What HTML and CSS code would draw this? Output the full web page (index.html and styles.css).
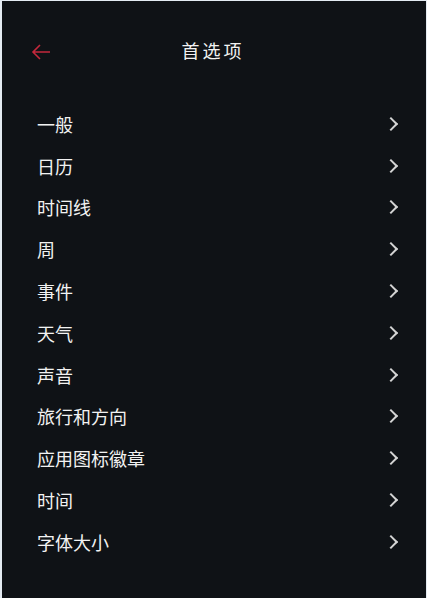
FILE: index.html
```html
<!DOCTYPE html>
<html lang="zh">
<head>
    <meta charset="UTF-8">
    <meta name="viewport" content="width=device-width, initial-scale=1.0">
    <title>首选项</title>
    <link rel="stylesheet" href="styles.css">
</head>
<body>
    <div class="screen">
        <header class="topbar">
            <a class="back" href="#">
                <svg width="20" height="16" viewBox="0 0 20 16"><path d="M19 8H2M9 1L2 8l7 7" fill="none" stroke="#c4283c" stroke-width="1.6"/></svg>
            </a>
            <h1>首选项</h1>
        </header>

        <ul class="menu">
            <li><span>一般</span><i class="chev"></i></li>
            <li><span>日历</span><i class="chev"></i></li>
            <li><span>时间线</span><i class="chev"></i></li>
            <li><span>周</span><i class="chev"></i></li>
            <li><span>事件</span><i class="chev"></i></li>
            <li><span>天气</span><i class="chev"></i></li>
            <li><span>声音</span><i class="chev"></i></li>
            <li><span>旅行和方向</span><i class="chev"></i></li>
            <li><span>应用图标徽章</span><i class="chev"></i></li>
            <li><span>时间</span><i class="chev"></i></li>
            <li><span>字体大小</span><i class="chev"></i></li>
        </ul>
    </div>
</body>
</html>
```

FILE: styles.css
```css
html, body {
    margin: 0;
    padding: 0;
    height: 100%;
}

body {
    background-color: #e4ebf2;
    font-family: "Noto Sans CJK SC", "Noto Sans", sans-serif;
}

.screen {
    margin: 1px 1px 0 2px;
    height: calc(100% - 1px);
    background-color: #0f1216;
    color: #f2f2f2;
}

.topbar {
    position: relative;
    height: 100px;
    display: flex;
    align-items: center;
    justify-content: center;
}

.topbar h1 {
    margin: 0 0 2px -2px;
    font-size: 18px;
    font-weight: normal;
    letter-spacing: 3px;
}

.back {
    position: absolute;
    left: 29px;
    top: 43px;
    line-height: 0;
}

.menu {
    list-style: none;
    margin: 2px 0 0;
    padding: 0 26px 0 35px;
}

.menu li {
    height: 41.8px;
    display: flex;
    align-items: center;
    justify-content: space-between;
    font-size: 18px;
}

.chev {
    width: 8px;
    height: 8px;
    border-top: 2px solid #d4d4d4;
    border-right: 2px solid #d4d4d4;
    transform: rotate(45deg);
    margin-right: 4px;
}
```
